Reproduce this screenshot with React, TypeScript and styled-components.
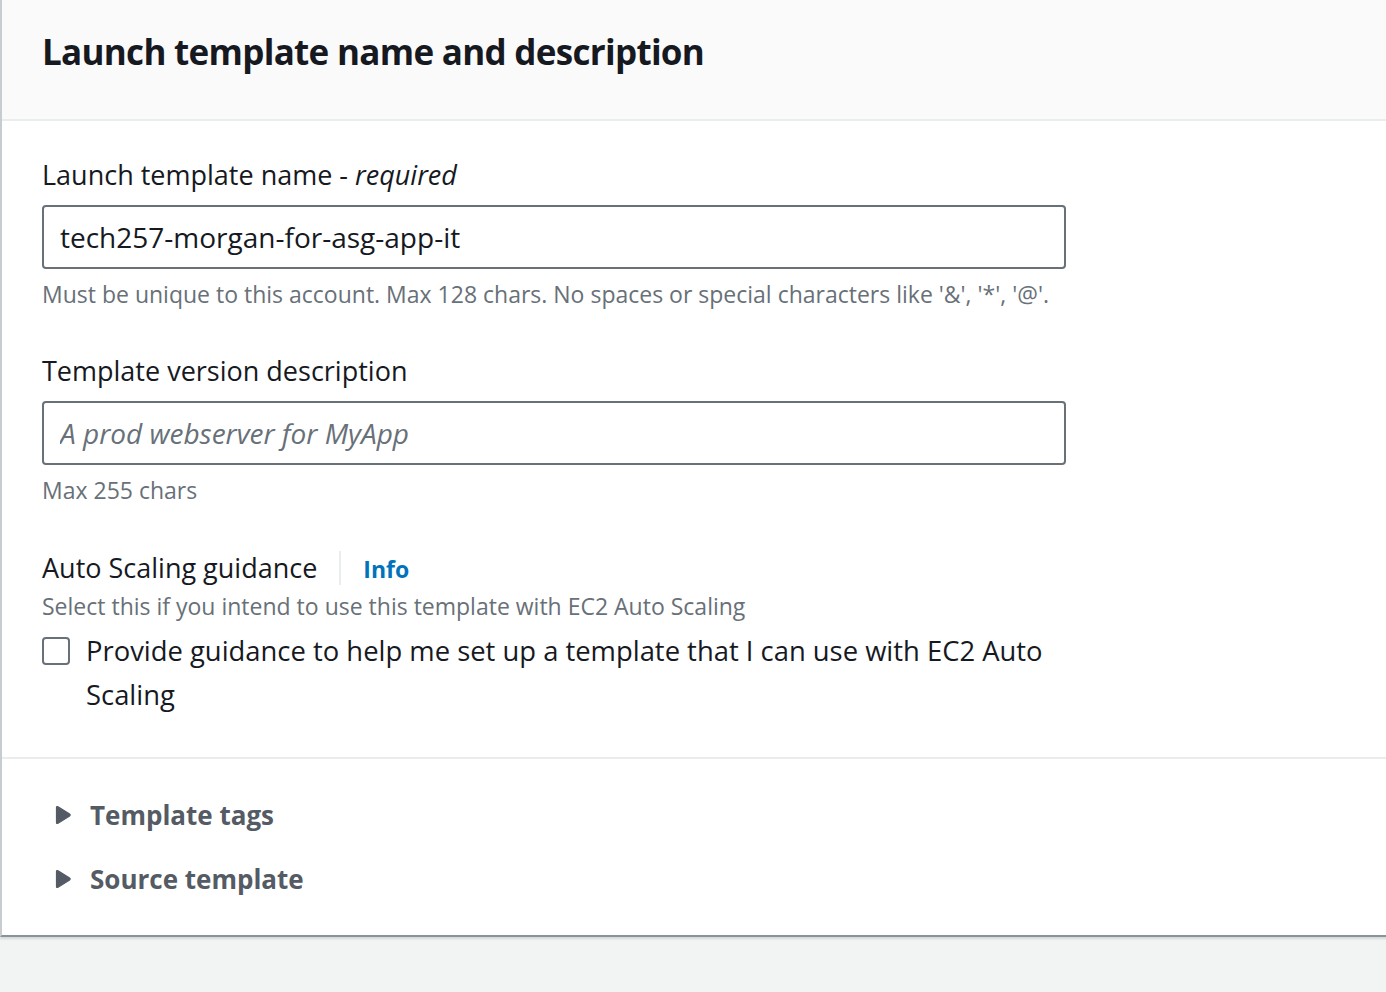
import { ReactElement } from 'react'
import styled, { createGlobalStyle } from 'styled-components'

const GlobalStyle = createGlobalStyle`
  html, body {
    margin: 0;
    padding: 0;
    background: #f2f3f3;
    overflow: hidden;
  }
  body {
    font-family: 'Open Sans', 'Noto Sans', Arial, sans-serif;
    color: #16191f;
  }
`

const Page = styled.div`
  width: 1386px;
  height: 992px;
  overflow: hidden;
`

const Card = styled.section`
  background: #ffffff;
  width: 1420px;
  border-left: 2px solid #c7cdce;
  border-bottom: 2px solid #879596;
  box-shadow: 0 2px 2px rgba(0, 28, 36, 0.12);
`

const CardHeader = styled.header`
  height: 121px;
  background: #fafafa;
  border-bottom: 2px solid #eaeded;
  display: flex;
  align-items: center;
  padding: 0 40px;
  padding-bottom: 16px;
  box-sizing: border-box;
`

const Title = styled.h2`
  margin: 0;
  font-size: 35px;
  font-weight: 700;
  letter-spacing: -0.7px;
  color: #16191f;
`

const CardBody = styled.div`
  padding: 32px 40px 40px;
  border-bottom: 2px solid #eaeded;
`

const Field = styled.div<{ $gap?: number }>`
  display: flex;
  flex-direction: column;
  margin-top: ${(p) => p.$gap ?? 0}px;
`

const Label = styled.label`
  font-size: 27px;
  line-height: 44px;
  color: #16191f;

  em {
    font-style: italic;
  }
`

const LabelRow = styled.div`
  display: flex;
  align-items: center;
`

const InfoDivider = styled.span`
  width: 2px;
  height: 34px;
  background: #eaeded;
  margin: 0 22px 0 22px;
`

const InfoLink = styled.a`
  font-size: 23px;
  font-weight: 700;
  color: #0073bb;
  text-decoration: none;
  line-height: 44px;
  padding-top: 2px;
`

const Input = styled.input`
  width: 1024px;
  height: 64px;
  margin-top: 8px;
  box-sizing: border-box;
  border: 2px solid #687078;
  border-radius: 4px;
  padding: 0 16px;
  font-family: inherit;
  font-size: 28px;
  color: #16191f;
  outline: none;

  &::placeholder {
    color: #687078;
    font-style: italic;
  }
`

const Hint = styled.div<{ $gap?: number }>`
  font-size: 23px;
  line-height: 36px;
  color: #687078;
  margin-top: ${(p) => p.$gap ?? 7}px;
`

const CheckRow = styled.label`
  display: flex;
  align-items: flex-start;
  gap: 16px;
  margin-top: 5px;
`

const CheckBox = styled.span`
  flex: none;
  width: 28px;
  height: 28px;
  margin-top: 8px;
  box-sizing: border-box;
  border: 2px solid #687078;
  border-radius: 4px;
  background: #fff;
`

const CheckText = styled.span`
  font-size: 27.4px;
  line-height: 44px;
  color: #16191f;
  max-width: 975px;
`

const Expandables = styled.div`
  padding: 34px 40px 34px 52px;
  display: flex;
  flex-direction: column;
  gap: 20px;
`

const Expandable = styled.div`
  display: flex;
  align-items: center;
  gap: 18px;
  height: 44px;
  font-size: 26px;
  font-weight: 700;
  color: #545b64;
  cursor: pointer;
`

const NextHeading = styled.h2`
  margin: 52px 0 0 42px;
  font-size: 28px;
  font-weight: 700;
  line-height: 40px;
  color: #16191f;
`

const Caret = (): ReactElement => (
  <svg width="18" height="22" viewBox="0 0 18 22" aria-hidden>
    <path d="M4 2.8 L15.6 10.1 Q16.8 11 15.6 11.9 L4 19.2 Q2.5 20 2.5 18.4 V3.6 Q2.5 2 4 2.8 Z" fill="#545b64" stroke="#545b64" strokeWidth="1.2" strokeLinejoin="round" />
  </svg>
)

export default function App(): ReactElement {
  return (
    <Page>
      <GlobalStyle />
      <Card>
        <CardHeader>
          <Title>Launch template name and description</Title>
        </CardHeader>
        <CardBody>
          <Field>
            <Label>
              Launch template name - <em>required</em>
            </Label>
            <Input defaultValue="tech257-morgan-for-asg-app-it" />
            <Hint>Must be unique to this account. Max 128 chars. No spaces or special characters like '&amp;', '*', '@'.</Hint>
          </Field>
          <Field $gap={37}>
            <Label>Template version description</Label>
            <Input placeholder="A prod webserver for MyApp" />
            <Hint>Max 255 chars</Hint>
          </Field>
          <Field $gap={37}>
            <LabelRow>
              <Label>Auto Scaling guidance</Label>
              <InfoDivider />
              <InfoLink href="#">Info</InfoLink>
            </LabelRow>
            <Hint $gap={-3}>Select this if you intend to use this template with EC2 Auto Scaling</Hint>
            <CheckRow>
              <CheckBox />
              <CheckText>Provide guidance to help me set up a template that I can use with EC2 Auto Scaling</CheckText>
            </CheckRow>
          </Field>
        </CardBody>
        <Expandables>
          <Expandable>
            <Caret />
            Template tags
          </Expandable>
          <Expandable>
            <Caret />
            Source template
          </Expandable>
        </Expandables>
      </Card>
      <NextHeading>Application and OS Images (Amazon Machine Image)</NextHeading>
    </Page>
  )
}
